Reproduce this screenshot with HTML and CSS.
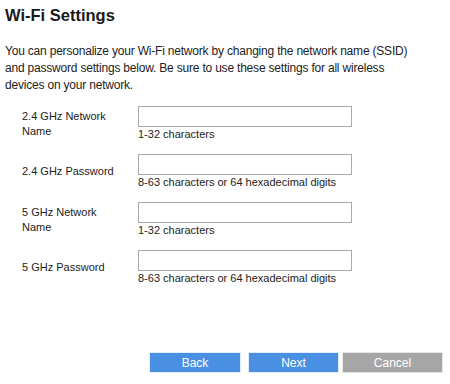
FILE: index.html
```html
<!DOCTYPE html>
<html>
<head>
<meta charset="utf-8">
<link rel="stylesheet" href="styles.css">
</head>
<body>
<div class="page">
  <h1 class="title">Wi-Fi Settings</h1>
  <p class="intro">You can personalize your Wi-Fi network by changing the network name (SSID) and password settings below. Be sure to use these settings for all wireless devices on your network.</p>
  <div class="form">
    <div class="row">
      <label class="label">2.4 GHz Network Name</label>
      <div class="field"><input class="input" type="text"><div class="hint">1-32 characters</div></div>
    </div>
    <div class="row">
      <label class="label">2.4 GHz Password</label>
      <div class="field"><input class="input" type="text"><div class="hint">8-63 characters or 64 hexadecimal digits</div></div>
    </div>
    <div class="row">
      <label class="label">5 GHz Network Name</label>
      <div class="field"><input class="input" type="text"><div class="hint">1-32 characters</div></div>
    </div>
    <div class="row">
      <label class="label">5 GHz Password</label>
      <div class="field"><input class="input" type="text"><div class="hint">8-63 characters or 64 hexadecimal digits</div></div>
    </div>
  </div>
  <div class="actions">
    <button class="btn btn-blue btn-back">Back</button>
    <button class="btn btn-blue btn-next">Next</button>
    <button class="btn btn-gray btn-cancel">Cancel</button>
  </div>
</div>
</body>
</html>
```
FILE: styles.css
```css
html, body { margin: 0; padding: 0; background: #fff; }
body { font-family: "Liberation Sans", Arial, sans-serif; color: #222; }
.page { padding: 5px 7px 0 5px; width: 438px; height: 379px; display: flex; flex-direction: column; }
.title { font-size: 16.5px; font-weight: bold; margin: 0; line-height: 20px; color: #1a1a1a; }
.intro { font-size: 12px; letter-spacing: -0.2px; line-height: 17px; margin: 18px 0 0 0; color: #222; width: 404px; }
.form { margin-top: 12px; display: flex; flex-direction: column; gap: 13px; }
.row { display: flex; align-items: center; }
.label { width: 95px; padding-left: 17px; padding-right: 21px; font-size: 11px; line-height: 15px; color: #222; flex: none; }
.field { display: flex; flex-direction: column; }
.input { width: 214px; height: 21px; box-sizing: border-box; border: 1px solid #a9a9a9; margin: 0; padding: 0 3px; background: #fff; }
.hint { font-size: 11px; line-height: 14px; color: #222; }
.actions { margin-top: auto; margin-bottom: 11px; display: flex; justify-content: flex-end; }
.btn { height: 21px; border: 1px solid #e4eefa; color: #fff; font-family: "Liberation Sans", Arial, sans-serif; font-size: 12px; padding: 0; }
.btn-blue { background: #4a90e2; }
.btn-gray { background: #a6a6a6; border-color: #e6e6e6; }
.btn-back { width: 92px; margin-right: 7px; }
.btn-next { width: 91px; margin-right: 3px; }
.btn-cancel { width: 101px; }
```
